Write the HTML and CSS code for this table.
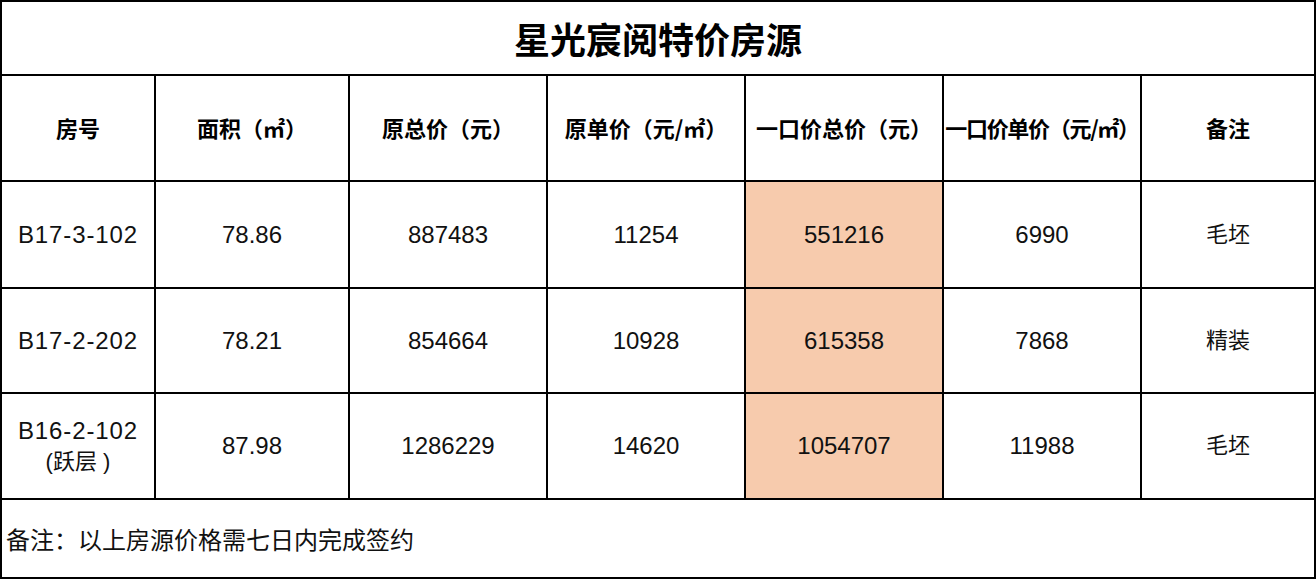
FILE: index.html
```html
<!DOCTYPE html>
<html lang="zh">
<head>
<meta charset="utf-8">
<link rel="stylesheet" href="styles.css">
</head>
<body>
<div class="sheet">
  <div class="cell title">星光宸阅特价房源</div>

  <div class="cell head">房号</div>
  <div class="cell head">面积（㎡）</div>
  <div class="cell head">原总价（元）</div>
  <div class="cell head">原单价（元/㎡）</div>
  <div class="cell head">一口价总价（元）</div>
  <div class="cell head tight">一口价单价（元/㎡）</div>
  <div class="cell head">备注</div>

  <div class="cell num code">B17-3-102</div>
  <div class="cell num">78.86</div>
  <div class="cell num">887483</div>
  <div class="cell num">11254</div>
  <div class="cell num hl">551216</div>
  <div class="cell num">6990</div>
  <div class="cell">毛坯</div>

  <div class="cell num code">B17-2-202</div>
  <div class="cell num">78.21</div>
  <div class="cell num">854664</div>
  <div class="cell num">10928</div>
  <div class="cell num hl">615358</div>
  <div class="cell num">7868</div>
  <div class="cell">精装</div>

  <div class="cell two"><span class="num code">B16-2-102</span><span class="sub">(跃层 )</span></div>
  <div class="cell num">87.98</div>
  <div class="cell num">1286229</div>
  <div class="cell num">14620</div>
  <div class="cell num hl">1054707</div>
  <div class="cell num">11988</div>
  <div class="cell">毛坯</div>

  <div class="cell note">备注：以上房源价格需七日内完成签约</div>
</div>
</body>
</html>
```

FILE: styles.css
```css
html, body {
  margin: 0;
  padding: 0;
  background: #ffffff;
}
.sheet {
  display: grid;
  grid-template-columns: 152px 192px 196px 196px 196px 196px 172px;
  grid-template-rows: 72px 104px 105px 103px 104px 77px;
  gap: 2px;
  padding: 2px;
  width: 1316px;
  box-sizing: border-box;
  background: #000000;
  font-family: "Liberation Sans", "Noto Sans CJK SC", sans-serif;
  font-size: 22px;
  color: #111111;
}
.cell {
  background: #ffffff;
  display: flex;
  align-items: center;
  justify-content: center;
  text-align: center;
  white-space: nowrap;
  overflow: hidden;
  line-height: 1.25;
}
.num {
  font-size: 24px;
}
.code {
  letter-spacing: 0.9px;
}
.title {
  grid-column: 1 / -1;
  font-family: "Noto Sans CJK SC", sans-serif;
  font-weight: 700;
  font-size: 36px;
  color: #000000;
}
.head {
  font-family: "Noto Sans CJK SC", sans-serif;
  font-weight: 700;
  font-size: 22px;
  color: #000000;
}
.tight {
  letter-spacing: -1.3px;
}
.hl {
  background: #f7cbad;
}
.two {
  flex-direction: column;
  gap: 2px;
}
.sub {
  font-size: 22px;
}
.note {
  grid-column: 1 / -1;
  justify-content: flex-start;
  padding-left: 4px;
  font-family: "Noto Sans CJK SC", sans-serif;
  font-size: 24px;
}
```
